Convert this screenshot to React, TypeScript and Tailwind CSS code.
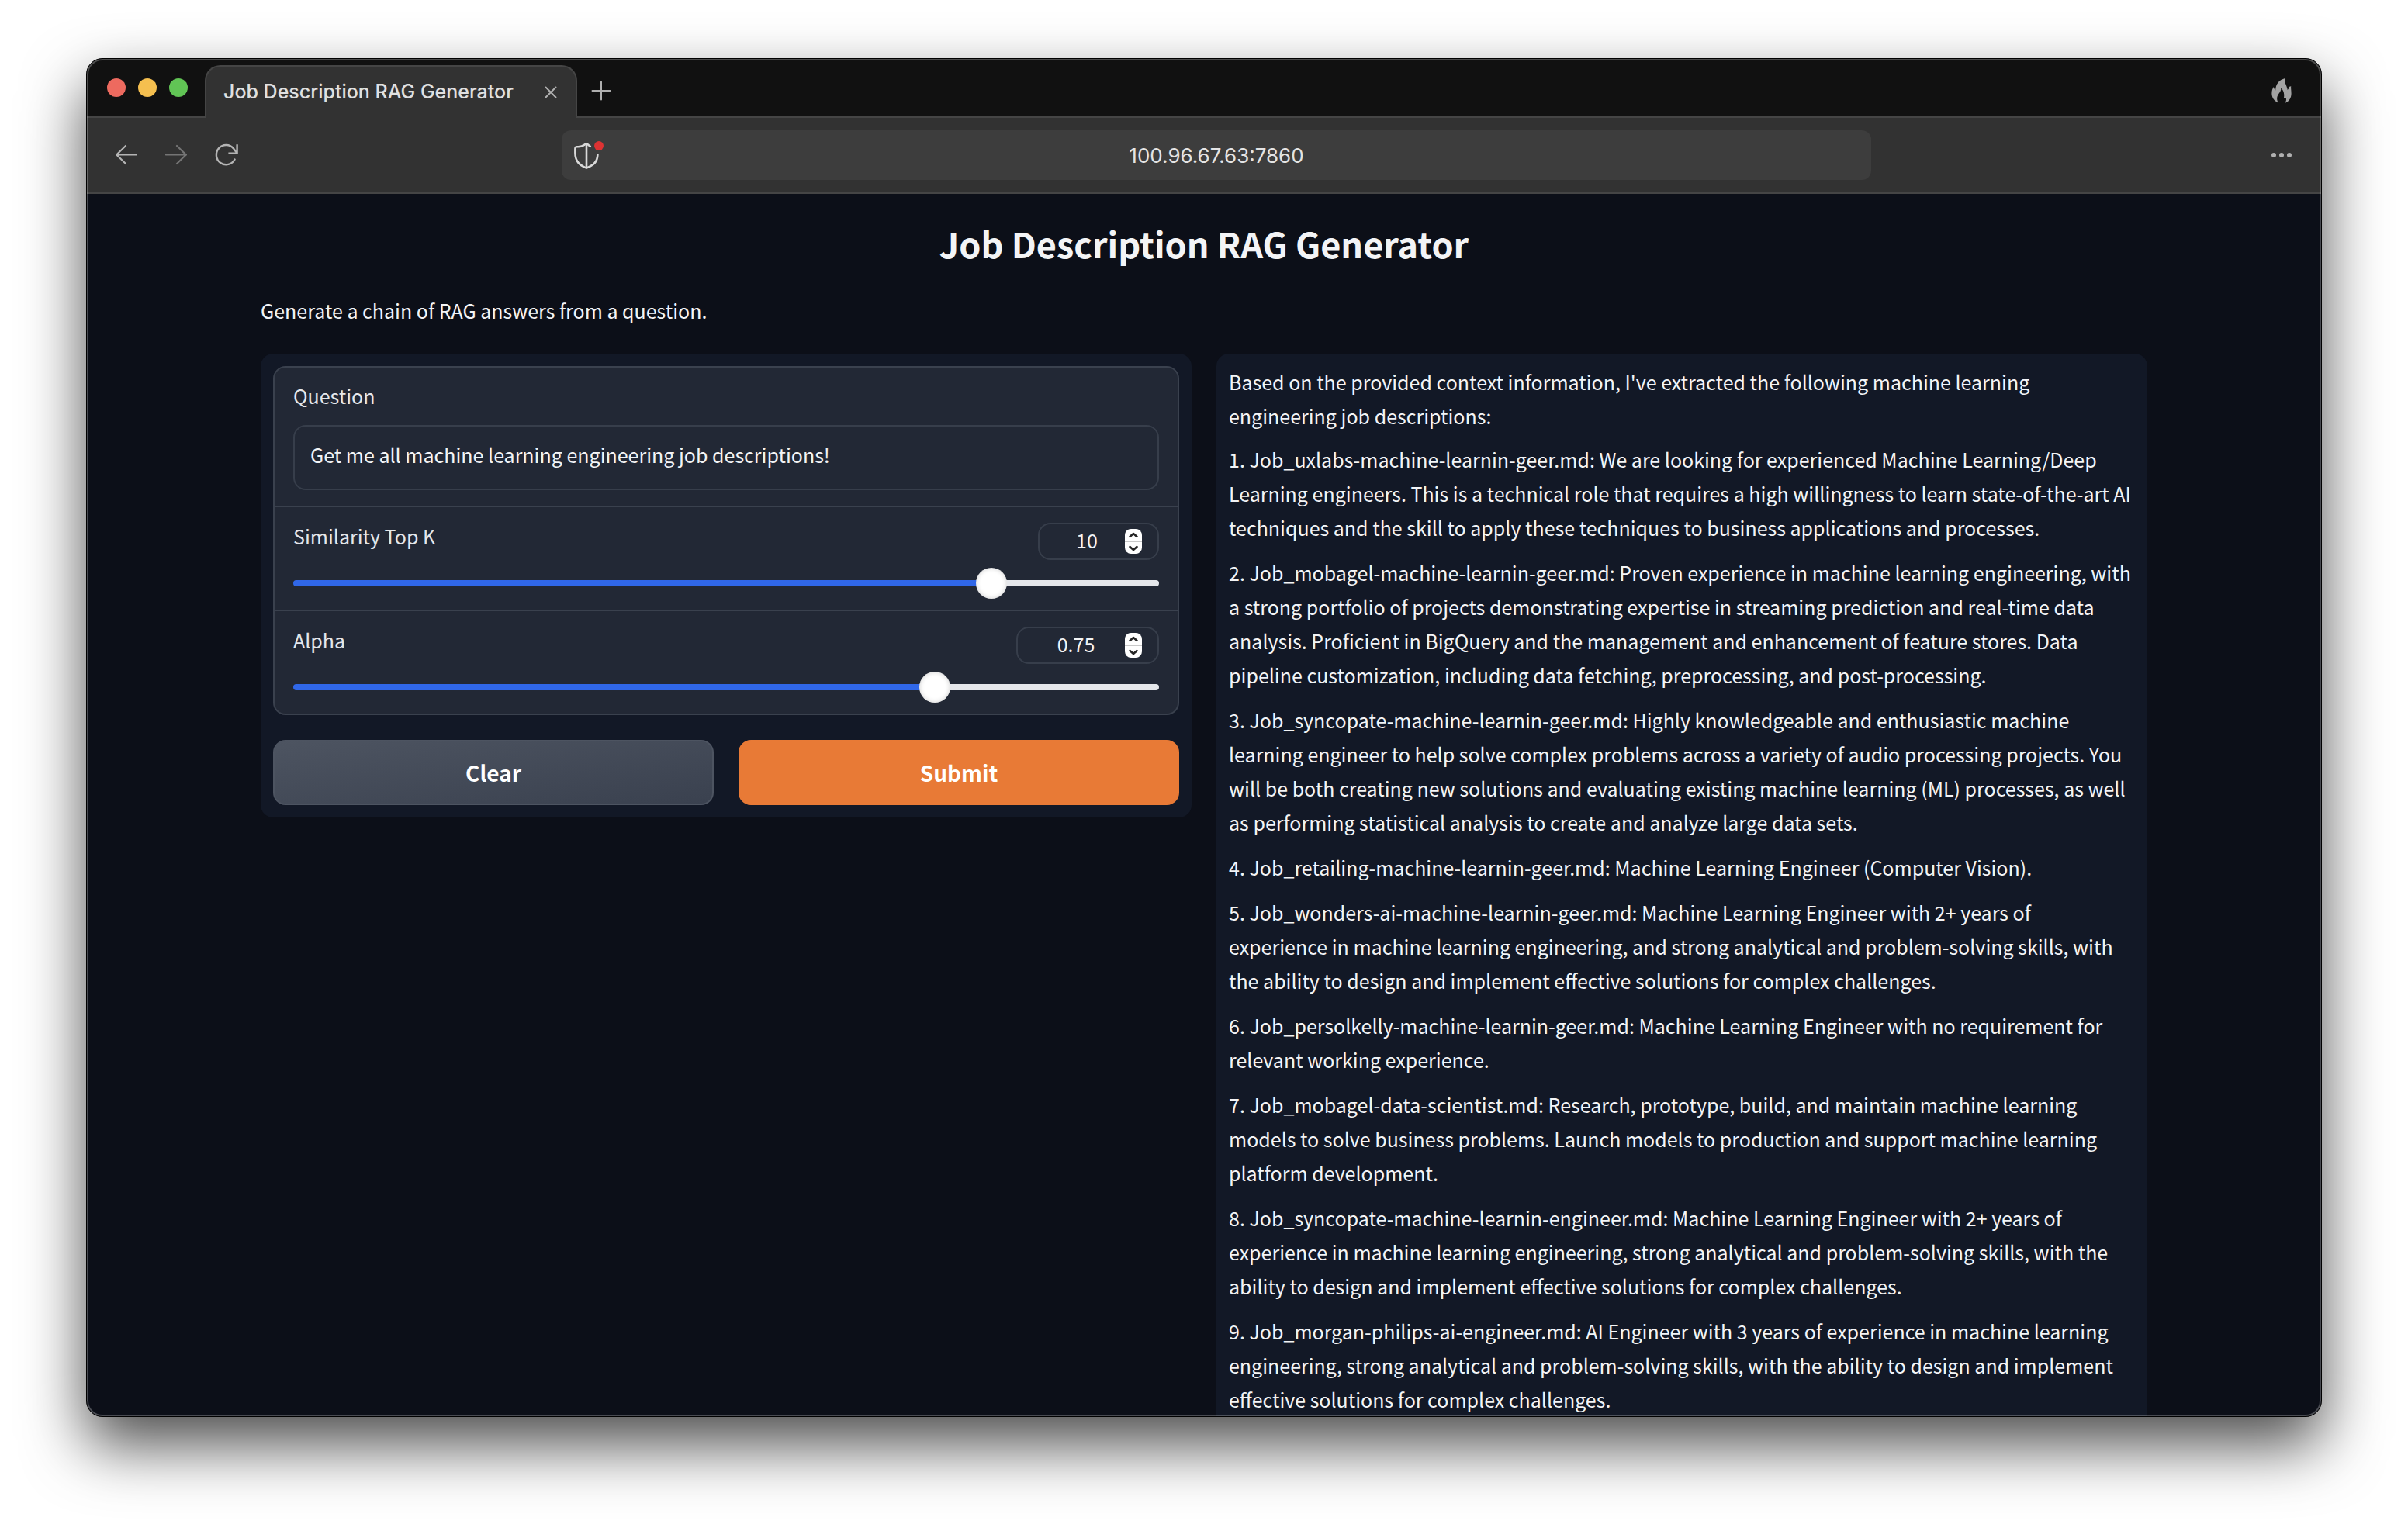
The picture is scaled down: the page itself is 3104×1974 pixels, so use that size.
import { useState } from "react";

const INTRO =
  "Based on the provided context information, I've extracted the following machine learning engineering job descriptions:";

const ANSWERS = [
  "1. Job_uxlabs-machine-learnin-geer.md: We are looking for experienced Machine Learning/Deep Learning engineers. This is a technical role that requires a high willingness to learn state-of-the-art AI techniques and the skill to apply these techniques to business applications and processes.",
  "2. Job_mobagel-machine-learnin-geer.md: Proven experience in machine learning engineering, with a strong portfolio of projects demonstrating expertise in streaming prediction and real-time data analysis. Proficient in BigQuery and the management and enhancement of feature stores. Data pipeline customization, including data fetching, preprocessing, and post-processing.",
  "3. Job_syncopate-machine-learnin-geer.md: Highly knowledgeable and enthusiastic machine learning engineer to help solve complex problems across a variety of audio processing projects. You will be both creating new solutions and evaluating existing machine learning (ML) processes, as well as performing statistical analysis to create and analyze large data sets.",
  "4. Job_retailing-machine-learnin-geer.md: Machine Learning Engineer (Computer Vision).",
  "5. Job_wonders-ai-machine-learnin-geer.md: Machine Learning Engineer with 2+ years of experience in machine learning engineering, and strong analytical and problem-solving skills, with the ability to design and implement effective solutions for complex challenges.",
  "6. Job_persolkelly-machine-learnin-geer.md: Machine Learning Engineer with no requirement for relevant working experience.",
  "7. Job_mobagel-data-scientist.md: Research, prototype, build, and maintain machine learning models to solve business problems. Launch models to production and support machine learning platform development.",
  "8. Job_syncopate-machine-learnin-engineer.md: Machine Learning Engineer with 2+ years of experience in machine learning engineering, strong analytical and problem-solving skills, with the ability to design and implement effective solutions for complex challenges.",
  "9. Job_morgan-philips-ai-engineer.md: AI Engineer with 3 years of experience in machine learning engineering, strong analytical and problem-solving skills, with the ability to design and implement effective solutions for complex challenges.",
];

function TitleBar() {
  return (
    <div className="flex h-[76px] shrink-0 bg-[#111111]">
      <div className="flex w-[152px] shrink-0 items-center gap-4 border-b-2 border-[#454545] pl-[26px]">
        <span className="size-6 rounded-full bg-[#ed6a5f]" />
        <span className="size-6 rounded-full bg-[#f5bf4f]" />
        <span className="size-6 rounded-full bg-[#61c555]" />
      </div>
      <div className="mt-2 flex w-[480px] shrink-0 items-center justify-between rounded-t-[20px] border-2 border-b-0 border-[#454545] bg-[#323232] pr-6 pl-[22px]">
        <span className="text-[25px] font-medium text-[#e0e0e0]">Job Description RAG Generator</span>
        <button aria-label="Close tab" className="flex size-4 items-center justify-center">
          <svg viewBox="0 0 16 16" className="size-4" fill="none" stroke="#b0b0b0" strokeWidth="2" strokeLinecap="round">
            <path d="M1.5 1.5l13 13M14.5 1.5l-13 13" />
          </svg>
        </button>
      </div>
      <div className="flex flex-1 items-center justify-between border-b-2 border-[#454545] pt-2 pr-[38px] pl-[18px]">
        <button aria-label="New tab">
          <svg viewBox="0 0 26 26" className="size-[26px]" fill="none" stroke="#b0b0b0" strokeWidth="2" strokeLinecap="round">
            <path d="M13 1.5v23M1.5 13h23" />
          </svg>
        </button>
        <button aria-label="Clear browsing data">
          <svg viewBox="0 0 26 32" className="h-8 w-[26px]" fill="#a3a3a3">
            <path d="M17.5 0C17 3 17.3 5 18.6 8.2C19.6 10.6 20.4 12.6 20.7 15C22 14 22.8 12.4 23.3 10.6C23.6 10.9 24.3 10.7 25.2 10C24.8 12.6 25.6 15 25.6 19.5C25.6 25 23 30 17.3 31.9C18.9 29.6 19.4 27.6 18.7 25.4C18.3 26.2 17.4 26.6 15.8 25.8C17.2 21 15.6 15 12.2 12.2C12.8 15.6 11 17.6 9.3 20C6.7 23.7 6.4 27.6 9 31.7C3.6 29.6 .4 25 .4 19.6C.4 16 1.2 13.2 2.9 11C3.3 13 4 14.6 5.2 15.6C5.3 7.4 10 1.9 17.5 0Z" />
          </svg>
        </button>
      </div>
    </div>
  );
}

function Toolbar() {
  return (
    <div className="flex h-[98px] shrink-0 items-center border-b-2 border-[#454545] bg-[#323232] pr-[38px] pl-[37px]">
      <nav className="flex w-[575px] shrink-0 items-center gap-9">
        <button aria-label="Back">
          <svg viewBox="0 0 28 28" className="size-7" fill="none" stroke="#b4b4b4" strokeWidth="2.2" strokeLinecap="round" strokeLinejoin="round">
            <path d="M27 13.500H1M13 2L1.200 13.500L13 25" />
          </svg>
        </button>
        <button aria-label="Forward" disabled>
          <svg viewBox="0 0 28 28" className="size-7" fill="none" stroke="#747474" strokeWidth="2.2" strokeLinecap="round" strokeLinejoin="round">
            <path d="M1 13.500h26M15 2L26.800 13.500L15 25" />
          </svg>
        </button>
        <button aria-label="Reload">
          <svg viewBox="0 0 30 30" className="size-[30px]" fill="none" stroke="#b4b4b4" strokeWidth="2.4" strokeLinecap="round">
            <path d="M25.6 20.5A12.6 12.6 0 1 1 24 6.4L27.4 11" />
            <path d="M28.6 2.4v10.2H18.6" strokeLinecap="square" />
          </svg>
        </button>
      </nav>
      <div className="flex h-16 min-w-0 flex-1 items-center rounded-xl bg-[#3d3d3d] px-4">
        <svg viewBox="0 0 40 36" className="h-9 w-10" fill="none" stroke="#d9d9d9" strokeWidth="2.6" strokeLinecap="round" strokeLinejoin="round">
          <path d="M20.8 6.6C18.6 5.8 17.8 3.4 15.8 3.4C13.6 3.4 12.6 7.6 4.4 7.2C2 7 1.4 8 1.4 10V15C1.4 26 7 31 16 34.6C25 31 30 27 30.4 17.4" />
          <path d="M16 4v30" />
          <circle cx="32" cy="6" r="6" fill="#dd3333" stroke="none" />
        </svg>
        <input
          aria-label="Address"
          defaultValue="100.96.67.63:7860"
          className="min-w-0 flex-1 bg-transparent pr-10 text-center text-[26px] text-[#e4e4e4] outline-none"
        />
      </div>
      <div className="flex w-[542px] shrink-0 justify-end">
        <button aria-label="Menu" className="flex gap-1">
          <span className="size-1.5 rounded-full bg-[#b0b0b0]" />
          <span className="size-1.5 rounded-full bg-[#b0b0b0]" />
          <span className="size-1.5 rounded-full bg-[#b0b0b0]" />
        </button>
      </div>
    </div>
  );
}

type SliderRowProps = {
  id: string;
  label: string;
  min: number;
  max: number;
  step: number;
  initial: number;
  boxWidth: string;
};

function SliderRow({ id, label, min, max, step, initial, boxWidth }: SliderRowProps) {
  const [value, setValue] = useState(initial);
  const percent = ((value - min) / (max - min)) * 100;
  const change = (next: number) => setValue(Math.min(max, Math.max(min, next)));
  return (
    <div className="flex flex-col px-6 pt-5 pb-1">
      <div className="flex items-start justify-between">
        <label htmlFor={id} className="text-[25px] leading-[34px] text-[#e5e7eb]">
          {label}
        </label>
        <div className={`flex h-12 items-center rounded-2xl border-2 border-[#373e4b] pr-5 ${boxWidth}`}>
          <input
            aria-label={`${label} value`}
            type="number"
            min={min}
            max={max}
            step={step}
            value={value}
            onChange={(e) => change(Number(e.target.value))}
            className="min-w-0 flex-1 appearance-none bg-transparent pb-1 pl-3 text-center text-[25px] leading-10 text-[#f3f4f6] outline-none [-moz-appearance:textfield] [&::-webkit-inner-spin-button]:appearance-none"
          />
          <div className="flex h-8 w-[22px] flex-col divide-y-2 divide-[#c9c9c9] overflow-hidden rounded-lg bg-white">
            <button type="button" aria-label={`Increase ${label}`} onClick={() => change(value + step)} className="flex flex-1 items-center justify-center">
              <svg viewBox="0 0 12 8" className="h-2 w-3" fill="none" stroke="#262626" strokeWidth="2.6" strokeLinecap="round" strokeLinejoin="round">
                <path d="M1.5 6L6 2l4.500 4" />
              </svg>
            </button>
            <button type="button" aria-label={`Decrease ${label}`} onClick={() => change(value - step)} className="flex flex-1 items-center justify-center">
              <svg viewBox="0 0 12 8" className="h-2 w-3" fill="none" stroke="#262626" strokeWidth="2.6" strokeLinecap="round" strokeLinejoin="round">
                <path d="M1.5 2L6 6l4.500-4" />
              </svg>
            </button>
          </div>
        </div>
      </div>
      <div className="flex h-[60px] items-center">
        <input
          id={id}
          type="range"
          min={min}
          max={max}
          step={step}
          value={value}
          onChange={(e) => change(Number(e.target.value))}
          style={{ backgroundSize: `${percent}% 100%` }}
          className="h-2 w-full appearance-none rounded-sm bg-[#e5e7eb] bg-linear-to-r from-[#3067e8] to-[#3067e8] bg-no-repeat [&::-webkit-slider-thumb]:size-10 [&::-webkit-slider-thumb]:appearance-none [&::-webkit-slider-thumb]:rounded-full [&::-webkit-slider-thumb]:bg-white [&::-webkit-slider-thumb]:shadow-[inset_0_0_6px_rgba(0,0,0,0.2)]"
        />
      </div>
    </div>
  );
}

function QueryPanel() {
  return (
    <form className="flex flex-col gap-8 rounded-2xl bg-[#121826] p-4" onSubmit={(e) => e.preventDefault()}>
      <div className="divide-y-2 divide-[#3a414e] rounded-2xl border-2 border-[#3a414e] bg-[#222835]">
        <div className="flex flex-col gap-5 px-6 pt-[18px] pb-5">
          <label htmlFor="question" className="text-[25px] leading-9 text-[#e5e7eb]">
            Question
          </label>
          <textarea
            id="question"
            rows={1}
            defaultValue="Get me all machine learning engineering job descriptions!"
            className="block h-[84px] w-full resize-none rounded-2xl border-2 border-[#373e4b] bg-[#222835] px-5 py-[14px] text-[25px] leading-11 text-[#f3f4f6] outline-none"
          />
        </div>
        <SliderRow id="topk" label="Similarity Top K" min={1} max={12} step={1} initial={10} boxWidth="w-[156px]" />
        <SliderRow id="alpha" label="Alpha" min={0} max={1} step={0.01} initial={0.75} boxWidth="w-[184px]" />
      </div>
      <div className="flex gap-8">
        <button
          type="reset"
          className="h-[84px] flex-1 rounded-2xl border-2 border-[#4d5461] bg-linear-to-br from-[#4d5461] to-[#3a414f] text-[28px] font-bold text-white"
        >
          Clear
        </button>
        <button type="submit" className="h-[84px] flex-1 rounded-2xl border-2 border-[#e87a36] bg-[#e87a36] text-[28px] font-bold text-white">
          Submit
        </button>
      </div>
    </form>
  );
}

function AnswerPanel() {
  return (
    <section className="flex flex-col gap-3 rounded-2xl bg-[#121826] pt-[14px] pr-5 pl-4 text-[25px] leading-11 text-[#f3f4f6]">
      <p>{INTRO}</p>
      <ul className="flex flex-col gap-[14px] pb-8">
        {ANSWERS.map((text) => (
          <li key={text}>{text}</li>
        ))}
      </ul>
    </section>
  );
}

export default function App() {
  return (
    <div className="flex h-screen flex-col bg-white px-[111px] pt-[75px] pb-[147px] font-['Inter',sans-serif]">
      <div className="flex min-h-0 flex-1 flex-col rounded-[21px] border border-black bg-[#0c0f18] shadow-[0_36px_80px_rgba(0,0,0,0.7)]">
        <div className="relative flex min-h-0 flex-1 flex-col overflow-hidden rounded-[20px]">
          <TitleBar />
          <Toolbar />
          <main className="flex min-h-0 flex-1 flex-col px-56 pt-8 font-['Noto_Sans_CJK_SC',sans-serif]">
            <h1 className="text-center text-[45px] leading-[64px] font-bold text-[#f3f4f6]">Job Description RAG Generator</h1>
            <p className="mt-8 text-[25px] leading-11 text-[#f3f4f6]">Generate a chain of RAG answers from a question.</p>
            <div className="mt-[34px] grid grid-cols-2 items-start gap-8">
              <QueryPanel />
              <AnswerPanel />
            </div>
          </main>
          <div className="pointer-events-none absolute inset-0 rounded-[20px] border-2 border-white/25" />
        </div>
      </div>
    </div>
  );
}
